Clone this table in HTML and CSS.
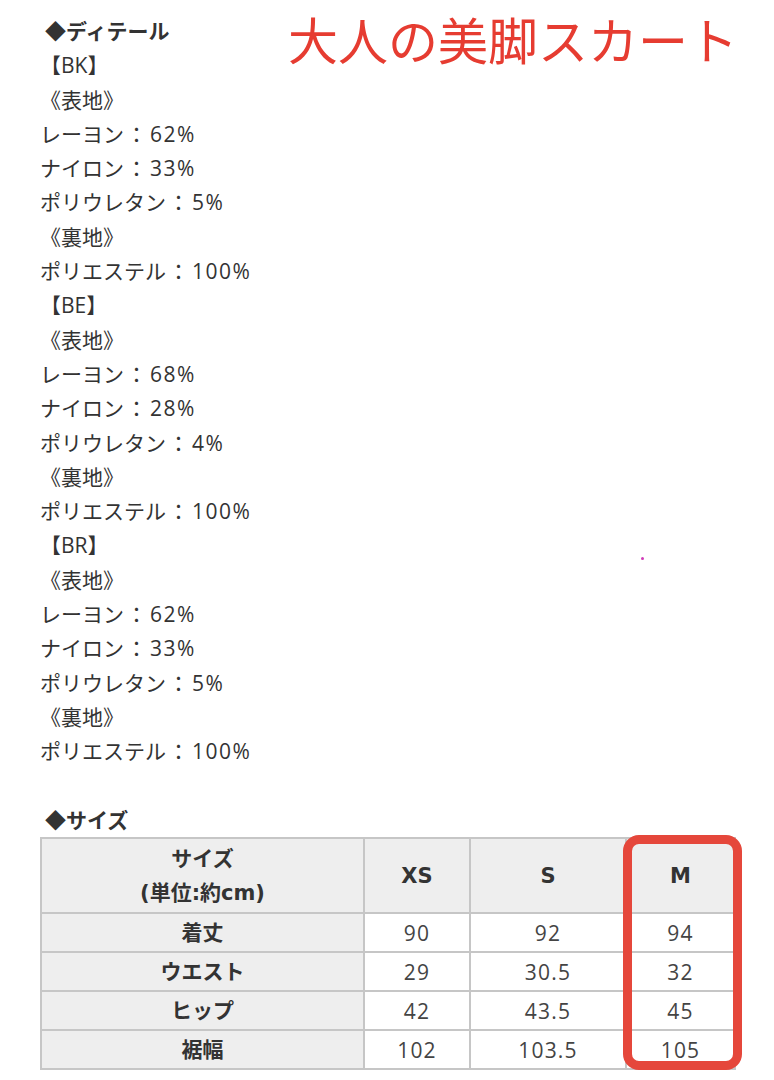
FILE: index.html
```html
<!DOCTYPE html>
<html lang="ja">
<head>
<meta charset="utf-8">
<title>大人の美脚スカート</title>
<link rel="stylesheet" href="styles.css">
</head>
<body>
<div class="page">
  <div class="details">
    <p class="heading">◆ディテール</p>
    <p>【BK】</p>
    <p>《表地》</p>
    <p>レーヨン<span class="sep">：</span><span class="num">62%</span></p>
    <p>ナイロン<span class="sep">：</span><span class="num">33%</span></p>
    <p>ポリウレタン<span class="sep">：</span><span class="num">5%</span></p>
    <p>《裏地》</p>
    <p>ポリエステル<span class="sep">：</span><span class="num">100%</span></p>
    <p>【BE】</p>
    <p>《表地》</p>
    <p>レーヨン<span class="sep">：</span><span class="num">68%</span></p>
    <p>ナイロン<span class="sep">：</span><span class="num">28%</span></p>
    <p>ポリウレタン<span class="sep">：</span><span class="num">4%</span></p>
    <p>《裏地》</p>
    <p>ポリエステル<span class="sep">：</span><span class="num">100%</span></p>
    <p>【BR】</p>
    <p>《表地》</p>
    <p>レーヨン<span class="sep">：</span><span class="num">62%</span></p>
    <p>ナイロン<span class="sep">：</span><span class="num">33%</span></p>
    <p>ポリウレタン<span class="sep">：</span><span class="num">5%</span></p>
    <p>《裏地》</p>
    <p>ポリエステル<span class="sep">：</span><span class="num">100%</span></p>
    <p class="blank">&nbsp;</p>
    <p class="heading">◆サイズ</p>
  </div>
  <table class="size-table">
    <colgroup>
      <col class="c-label">
      <col class="c-xs">
      <col class="c-s">
      <col class="c-m">
    </colgroup>
    <thead>
      <tr class="head-row">
        <th>サイズ<br>(単位:約cm)</th>
        <th>XS</th>
        <th>S</th>
        <th>M</th>
      </tr>
    </thead>
    <tbody>
      <tr><th>着丈</th><td>90</td><td>92</td><td>94</td></tr>
      <tr><th>ウエスト</th><td>29</td><td>30.5</td><td>32</td></tr>
      <tr><th>ヒップ</th><td>42</td><td>43.5</td><td>45</td></tr>
      <tr><th>裾幅</th><td>102</td><td>103.5</td><td>105</td></tr>
    </tbody>
  </table>
  <div class="title">大人の美脚スカート</div>
  <div class="highlight"></div>
  <span class="dot"></span>
</div>
</body>
</html>
```

FILE: styles.css
```css
html, body {
  margin: 0;
  padding: 0;
  background: #ffffff;
}

body {
  font-family: "Open Sans", "Noto Sans CJK JP", sans-serif;
  color: #333333;
}

.page {
  position: relative;
  width: 774px;
  height: 1080px;
  overflow: hidden;
  padding: 14px 0 0 40px;
  box-sizing: border-box;
}

.details p {
  margin: 0;
  font-size: 21px;
  line-height: 34.3px;
  height: 34.3px;
  white-space: nowrap;
}

.details .sep {
  margin-left: 2px;
}

.details .num {
  margin-left: 3px;
  letter-spacing: 1.5px;
}

.details .heading {
  font-weight: 700;
  font-size: 21px;
  padding-left: 5px;
}

.size-table {
  border-collapse: collapse;
  table-layout: fixed;
  width: 694px;
  font-size: 21px;
}

.c-label { width: 323px; }
.c-xs { width: 106px; }
.c-s { width: 156px; }
.c-m { width: 109px; }

.size-table th,
.size-table td {
  border: 2px solid #c6c6c6;
  text-align: center;
  padding: 0;
  line-height: 34px;
}

.size-table th {
  background: #eeeeee;
  font-family: "DejaVu Sans", "Noto Sans CJK JP", sans-serif;
  font-weight: 700;
  color: #333333;
}

.size-table td {
  background: #ffffff;
  color: #444444;
  font-weight: 400;
  letter-spacing: 1.2px;
}

.head-row {
  height: 75px;
}

.size-table tbody tr {
  height: 39px;
}

.title {
  position: absolute;
  left: 288px;
  top: 12px;
  font-family: "Noto Sans CJK JP", sans-serif;
  font-size: 50px;
  line-height: 52px;
  color: #e63c31;
  font-weight: 400;
  white-space: nowrap;
}

.highlight {
  position: absolute;
  left: 623px;
  top: 835px;
  width: 119px;
  height: 235px;
  box-sizing: border-box;
  border: 9px solid #e5473b;
  border-radius: 16px;
}

.dot {
  position: absolute;
  left: 641px;
  top: 557px;
  width: 3px;
  height: 3px;
  border-radius: 50%;
  background: #d03cb8;
}
```
